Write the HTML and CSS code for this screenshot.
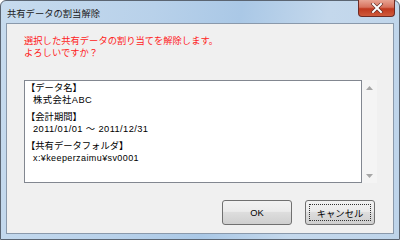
FILE: index.html
```html
<!DOCTYPE html>
<html lang="ja">
<head>
  <meta charset="UTF-8">
  <title>共有データの割当解除</title>
  <link rel="stylesheet" href="styles.css">
</head>
<body>
  <div class="window">
    <div class="titlebar">
      <span class="title">共有データの割当解除</span>
      <div class="close-btn">
        <svg width="14" height="10" viewBox="0 0 14 10">
          <path d="M3 1 L11 9 M11 1 L3 9" stroke="#5a2a24" stroke-width="3.2" stroke-linecap="square"/>
          <path d="M3 1 L11 9 M11 1 L3 9" stroke="#fff" stroke-width="2" stroke-linecap="square"/>
        </svg>
      </div>
    </div>
    <div class="client">
      <div class="message">
        <div>選択した共有データの割り当てを解除します。</div>
        <div>よろしいですか？</div>
      </div>
      <div class="info-row">
        <div class="info-box">
          <div class="line">【データ名】</div>
          <div class="line indent">株式会社ABC</div>
          <div class="line blank"></div>
          <div class="line">【会計期間】</div>
          <div class="line indent">2011/01/01 ～ 2011/12/31</div>
          <div class="line blank"></div>
          <div class="line">【共有データフォルダ】</div>
          <div class="line indent small">x:¥keeperzaimu¥sv0001</div>
        </div>
        <div class="scrollbar">
          <svg width="7" height="4" viewBox="0 0 7 4"><path d="M0 4 L3.5 0 L7 4 Z" fill="#a6a6a6"/></svg>
          <svg width="7" height="4" viewBox="0 0 7 4"><path d="M0 0 L3.5 4 L7 0 Z" fill="#a6a6a6"/></svg>
        </div>
      </div>
      <div class="btn-row">
        <button class="dlg-btn">OK</button>
        <button class="dlg-btn focused"><span class="focus-rect">キャンセル</span></button>
      </div>
    </div>
  </div>
</body>
</html>
```

FILE: styles.css
```css
body {
  margin: 0;
  background: #fff;
  font-family: "Liberation Sans", "Noto Sans CJK JP", sans-serif;
}
.window {
  width: 400px;
  height: 240px;
  box-sizing: border-box;
  border: 1px solid #5b6572;
  border-radius: 6px 6px 0 0;
  background: linear-gradient(100deg, #c7dbee 0%, #b8d1ea 35%, #aac8e6 55%, #c4d8ec 75%, #bed4ea 100%);
  padding: 0 5px 5px 5px;
  display: flex;
  flex-direction: column;
}
.titlebar {
  height: 22px;
  display: flex;
  align-items: flex-start;
  justify-content: space-between;
}
.title {
  font-size: 9.3px;
  color: #1a1a1a;
  margin-top: 5px;
  margin-left: 1px;
}
.close-btn {
  width: 37px;
  height: 17px;
  margin-right: -1px;
  margin-top: -1px;
  box-sizing: border-box;
  border: 1px solid #6e2b25;
  border-top: none;
  border-radius: 0 0 4px 4px;
  background: linear-gradient(#e8a493 0%, #d7725d 45%, #c0391f 55%, #cf5a3c 100%);
  display: flex;
  align-items: center;
  justify-content: center;
}
.client {
  flex: 1;
  border: 1px solid #8a99ab;
  background: #f0f0f0;
  padding: 11px 14px 0 17px;
  display: flex;
  flex-direction: column;
}
.message {
  color: #ff2222;
  font-size: 9.3px;
  line-height: 12px;
  height: 45px;
}
.info-row {
  display: flex;
  height: 103px;
}
.info-box {
  width: 338px;
  box-sizing: border-box;
  border: 1px solid #828790;
  background: #fff;
  padding: 1px 1px;
  font-size: 9.3px;
  color: #000;
}
.line {
  height: 12px;
  line-height: 12px;
  white-space: nowrap;
}
.line.blank {
  height: 5px;
}
.indent {
  padding-left: 7px;
  letter-spacing: 0.4px;
}
.small {
  font-size: 9px;
}
.scrollbar {
  width: 15px;
  background: #f4f4f4;
  display: flex;
  flex-direction: column;
  justify-content: space-between;
  align-items: center;
  padding: 6px 0 5px 0;
  box-sizing: border-box;
}
.btn-row {
  display: flex;
  justify-content: flex-end;
  gap: 13px;
  margin-top: 17px;
  padding-right: 4px;
}
.dlg-btn {
  width: 70px;
  height: 25px;
  border: 1px solid #707070;
  border-radius: 3px;
  background: linear-gradient(#f2f2f2 0%, #ebebeb 45%, #dddddd 50%, #cfcfcf 100%);
  font-family: "Liberation Sans", "Noto Sans CJK JP", sans-serif;
  font-size: 9.3px;
  color: #000;
  padding: 0;
  display: flex;
  align-items: center;
  justify-content: center;
}
.focus-rect {
  width: 62px;
  height: 17px;
  border: 1px dotted #333;
  box-sizing: border-box;
  display: flex;
  align-items: center;
  justify-content: center;
}
```
